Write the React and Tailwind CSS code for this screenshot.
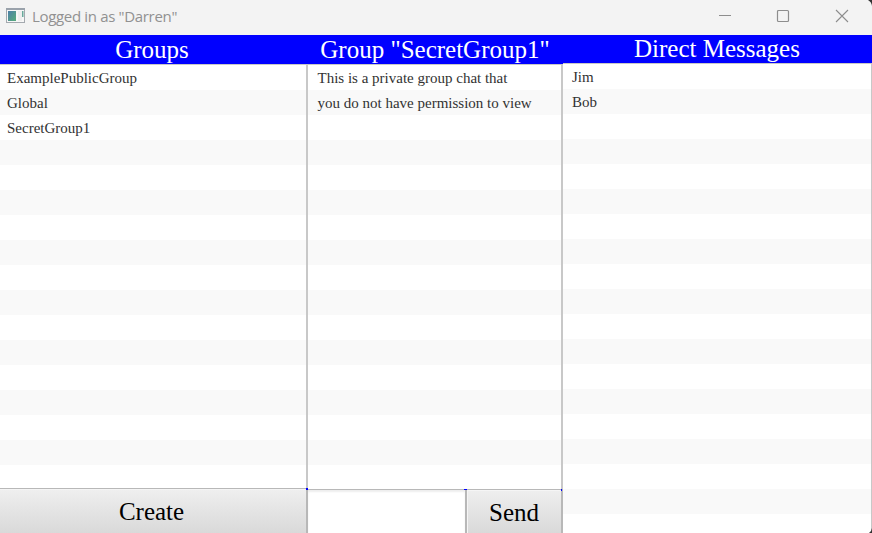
const serif = "font-['Liberation_Serif','Times_New_Roman',serif]";

function List({ items, count, pad }) {
  return (
    <ul className="min-h-0 flex-1 overflow-hidden">
      {Array.from({ length: count }, (_, i) => (
        <li
          key={i}
          className={`h-[25px] whitespace-pre pt-px text-[15px] leading-[25px] text-[#323232] ${pad} ${i % 2 ? "bg-[#f9f9f9]" : "bg-white"}`}
        >
          {items[i] || ""}
        </li>
      ))}
    </ul>
  );
}

function Header({ children, className }) {
  return (
    <h2 className={`shrink-0 whitespace-pre border-b border-[#c8c8c8] bg-[#0000ff] text-center text-[25px] text-white ${className}`}>
      {children}
    </h2>
  );
}

function Button({ children, className }) {
  return (
    <button
      className={`border-r-2 border-t border-[#b8b8b8] bg-linear-to-b from-[#efefef] to-[#d9d9d9] pt-[2px] text-[25px] leading-[42px] text-black ${className}`}
    >
      {children}
    </button>
  );
}

function TitleBar() {
  return (
    <header className="relative flex h-[35px] shrink-0 items-center bg-[#f3f3f3] pl-[6px] text-[#919191]">
      <svg width="20" height="16" viewBox="0 0 20 16" className="-mt-[3px]">
        <defs>
          <linearGradient id="pane" x1="0" y1="0" x2="1" y2="1">
            <stop offset="0" stopColor="#4d7fa8" />
            <stop offset="1" stopColor="#57ad7c" />
          </linearGradient>
        </defs>
        <rect x="0.5" y="0.5" width="18" height="14" fill="#f7f7f7" stroke="#a4a9af" />
        <path d="M0 1H19" stroke="#9aa2ab" strokeWidth="2" />
        <rect x="2" y="3" width="8" height="10" fill="url(#pane)" />
        <rect x="12" y="3" width="4" height="10" fill="#eeeeee" />
        <rect x="16" y="3" width="1.5" height="6" fill="#69a99b" />
      </svg>
      <h1 className="-mt-[3px] ml-[6px] whitespace-pre font-['Open_Sans','Noto_Sans',sans-serif] text-[15px] leading-5 tracking-[-0.33px]">
        Logged in as "Darren"
      </h1>
      <div className="ml-auto flex items-center pr-[23px]">
        <svg width="131" height="16" viewBox="0 0 131 16" fill="none" stroke="#8d8d8d" className="-mt-[3px]">
          <path d="M1 7.5H13" />
          <rect x="59.5" y="2.5" width="11" height="11" rx="1" strokeWidth="1.2" />
          <path d="M118 2L130 14M130 2L118 14" strokeWidth="1.1" />
        </svg>
      </div>
      <svg width="4" height="6" viewBox="0 0 4 6" className="absolute right-0 top-0">
        <path d="M0 0H4V6Q3.6 2 0 0Z" fill="#333333" />
      </svg>
    </header>
  );
}

export default function App() {
  return (
    <div className={`relative flex h-[533px] w-[872px] flex-col overflow-hidden bg-white ${serif}`}>
      <TitleBar />
      <main className="flex min-h-0 flex-1">
        <section className="flex w-[308px] flex-col">
          <Header className="h-[30px] pr-[4px] leading-[29px]">Groups</Header>
          <div className="flex min-h-0 flex-1 flex-col border-r-2 border-[#c8c8c8]">
            <List items={["ExamplePublicGroup", "Global", "SecretGroup1"]} count={17} pad="pl-[7px]" />
          </div>
          <Button className="h-[45px] shrink-0 pr-[3px] shadow-[inset_0_1px_0_#f5f5f5]">Create</Button>
        </section>
        <section className="flex w-[255px] flex-col">
          <Header className="h-[30px] pr-px leading-[29px]">Group "SecretGroup1"</Header>
          <div className="flex min-h-0 flex-1 flex-col border-r-2 border-[#c8c8c8]">
            <List
              items={["This is a private group chat that", "you do not have permission to view"]}
              count={17}
              pad="pl-[9.5px]"
            />
          </div>
          <div className="flex h-[44px] shrink-0">
            <input
              aria-label="Message"
              className="w-[159px] border-r-2 border-t border-[#b8b8b8] bg-white shadow-[inset_0_2px_2px_#eeeeee] outline-none"
            />
            <Button className="flex-1 shadow-[inset_1px_1px_0_#f5f5f5]">Send</Button>
          </div>
        </section>
        <section className="flex w-[309px] flex-col">
          <Header className="h-[29px] pr-px leading-[27px]">Direct Messages</Header>
          <div className="flex min-h-0 flex-1 flex-col border-r border-[#c8c8c8]">
            <List items={["Jim", "Bob"]} count={19} pad="pl-[9px]" />
          </div>
        </section>
      </main>
      <span className="absolute left-[306px] top-[488px] h-[2px] w-[2px] bg-[#0000ff]" />
      <span className="absolute left-[464px] top-[489px] h-px w-[3px] bg-[#0000ff]" />
      <span className="absolute left-[561px] top-[489px] h-[2px] w-px bg-[#0000ff]" />
      <svg width="3" height="5" viewBox="0 0 3 5" className="absolute bottom-0 right-0">
        <path d="M3 0V5H0Q2.5 3.5 3 0Z" fill="#333333" />
      </svg>
    </div>
  );
}
